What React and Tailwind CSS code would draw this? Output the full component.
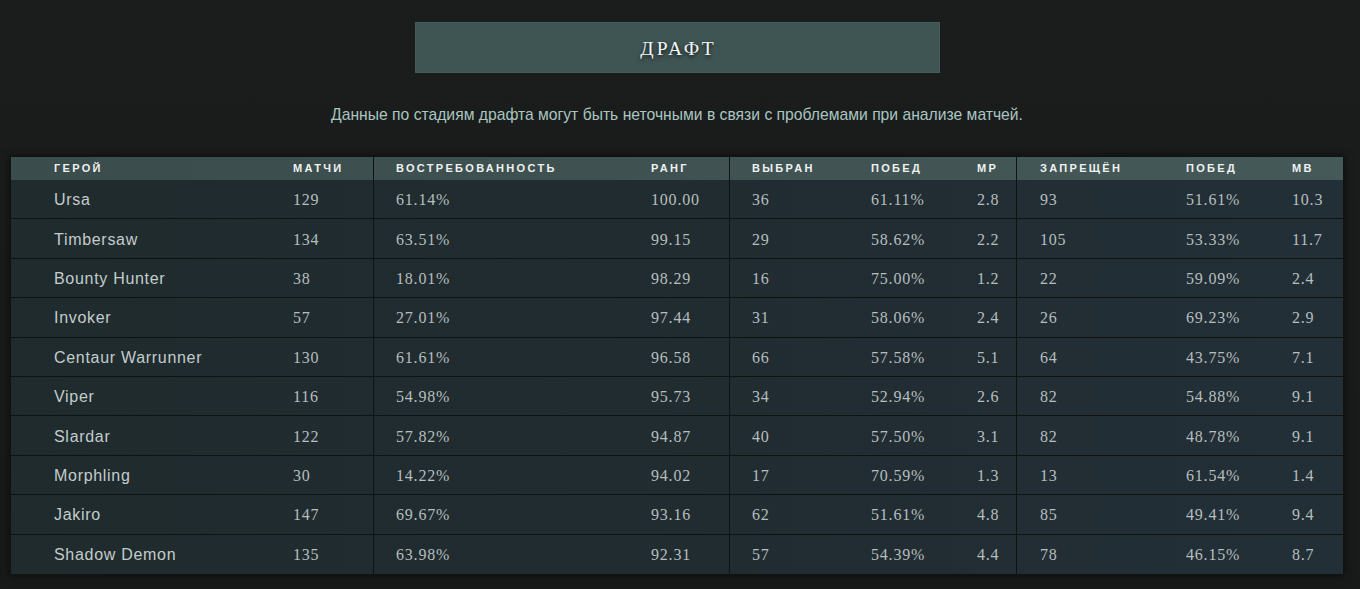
import React from "react";

const rows = [
  ["Ursa", "129", "61.14%", "100.00", "36", "61.11%", "2.8", "93", "51.61%", "10.3"],
  ["Timbersaw", "134", "63.51%", "99.15", "29", "58.62%", "2.2", "105", "53.33%", "11.7"],
  ["Bounty Hunter", "38", "18.01%", "98.29", "16", "75.00%", "1.2", "22", "59.09%", "2.4"],
  ["Invoker", "57", "27.01%", "97.44", "31", "58.06%", "2.4", "26", "69.23%", "2.9"],
  ["Centaur Warrunner", "130", "61.61%", "96.58", "66", "57.58%", "5.1", "64", "43.75%", "7.1"],
  ["Viper", "116", "54.98%", "95.73", "34", "52.94%", "2.6", "82", "54.88%", "9.1"],
  ["Slardar", "122", "57.82%", "94.87", "40", "57.50%", "3.1", "82", "48.78%", "9.1"],
  ["Morphling", "30", "14.22%", "94.02", "17", "70.59%", "1.3", "13", "61.54%", "1.4"],
  ["Jakiro", "147", "69.67%", "93.16", "62", "51.61%", "4.8", "85", "49.41%", "9.4"],
  ["Shadow Demon", "135", "63.98%", "92.31", "57", "54.39%", "4.4", "78", "46.15%", "8.7"],
];

const headers = ["ГЕРОЙ", "МАТЧИ", "ВОСТРЕБОВАННОСТЬ", "РАНГ", "ВЫБРАН", "ПОБЕД", "МР", "ЗАПРЕЩЁН", "ПОБЕД", "МВ"];

const cols = [
  "w-[261px] pl-[43px]",
  "w-[102px] pl-[21px] border-r border-[#0e1314]",
  "w-[256px] pl-[22px]",
  "w-[100px] pl-[21px] border-r border-[#0e1314]",
  "w-[120px] pl-[22px]",
  "w-[106px] pl-[21px]",
  "w-[61px] pl-[21px] border-r border-[#0e1314]",
  "w-[148px] pl-[23px]",
  "w-[106px] pl-[21px]",
  "w-[72px] pl-[21px]",
];

export default function App() {
  return (
    <div className="min-h-[589px] w-full bg-gradient-to-b from-[#1b1d1d] to-[#181a1a] pt-[22px] pb-[16px]">
      <div className="ml-[10px] w-[1334px] flex flex-col items-center">
        <div className="w-[525px] h-[51px] bg-[#3f5554] flex items-center justify-center border border-[#465c5b]">
          <span
            className="mt-[2px] text-[19.5px] tracking-[3px] text-[#f2f4f4] pl-[3px]"
            style={{ fontFamily: '"Liberation Serif", "DejaVu Serif", serif', textShadow: "0 2px 4px rgba(0,0,0,0.8)" }}
          >
            ДРАФТ
          </span>
        </div>
        <p
          className="mt-[33px] text-[15.7px] leading-[18px] text-[#a9c6c1]"
          style={{ fontFamily: '"Liberation Sans", Arial, sans-serif' }}
        >
          Данные по стадиям драфта могут быть неточными в связи с проблемами при анализе матчей.
        </p>
      </div>
      <div className="ml-[10px] mt-[32px] w-[1334px] border border-[#0e1314] shadow-[0_0_8px_rgba(0,0,0,0.6)]">
        <div className="flex h-[23px] bg-gradient-to-r from-[#3a4c4b] to-[#455958]">
          {headers.map((h, i) => (
            <div
              key={i}
              className={`${cols[i]} shrink-0 flex items-center text-[11px] font-bold tracking-[2.3px] text-[#eef2f2]`}
              style={{ fontFamily: '"Liberation Sans", Arial, sans-serif' }}
            >
              {h}
            </div>
          ))}
        </div>
        {rows.map((r, ri) => (
          <div
            key={ri}
            className={`flex h-[39.4px] bg-gradient-to-r from-[#1f2b2d] via-[#212c31] to-[#232f37] ${ri < rows.length - 1 ? "border-b border-[#0e1314]" : ""}`}
          >
            {r.map((c, ci) => (
              <div
                key={ci}
                className={`${cols[ci]} shrink-0 flex items-center pt-[2px] ${ci === 0 ? "text-[16px] text-[#c4cccc] tracking-[0.7px]" : "text-[16px] text-[#b6bebe] tracking-[0.8px]"}`}
                style={{
                  fontFamily: ci === 0 ? '"Liberation Sans", Arial, sans-serif' : '"Liberation Serif", "DejaVu Serif", serif',
                }}
              >
                {c}
              </div>
            ))}
          </div>
        ))}
      </div>
    </div>
  );
}
